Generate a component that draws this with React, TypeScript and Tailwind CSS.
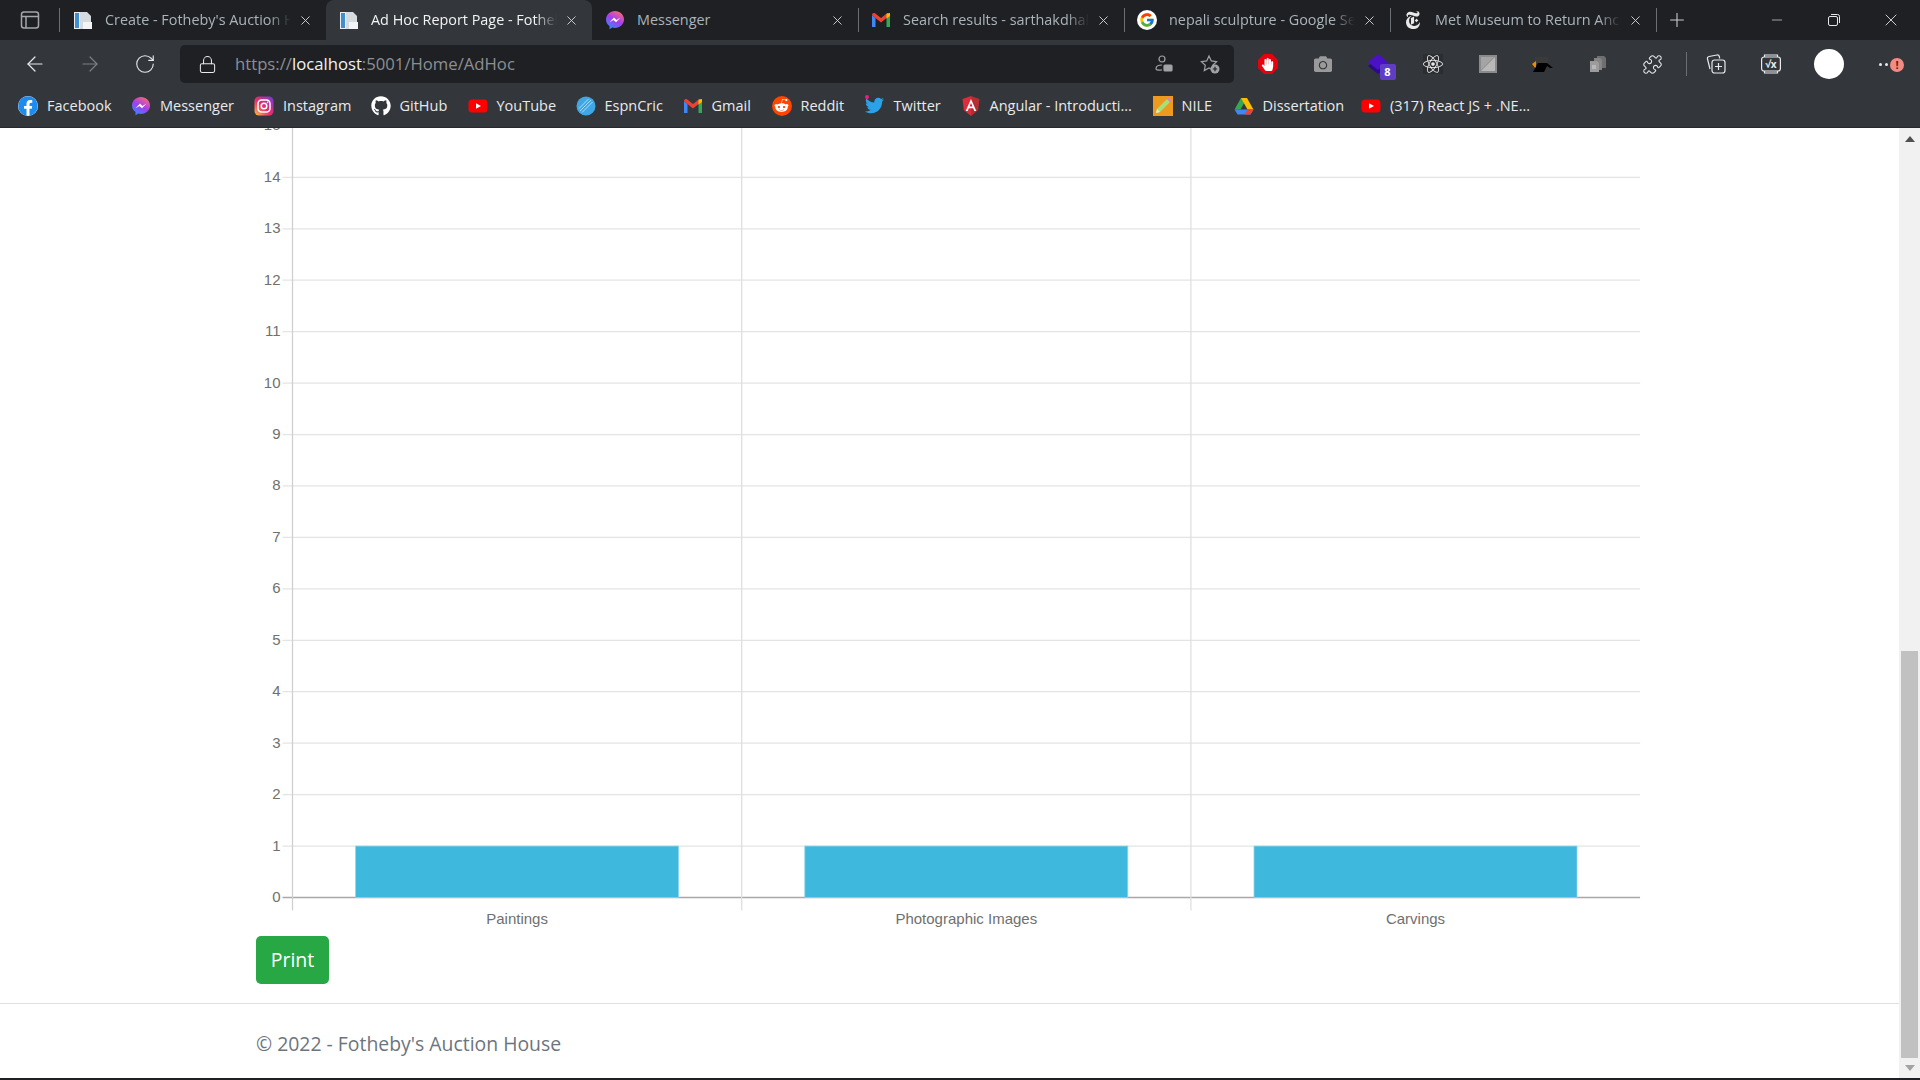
import type { ReactNode } from 'react'
import { ArrowLeft, ArrowRight, Lock, Minus, Plus, Puzzle, RotateCw, X } from 'lucide-react'
import { FaCamera, FaFacebook, FaGithub, FaHandPaper, FaReact, FaRedditAlien, FaTwitter } from 'react-icons/fa'
import { FcGoogle } from 'react-icons/fc'
import { SiNewyorktimes } from 'react-icons/si'

/* ---------- favicons ---------- */

function DocIcon() {
  return (
    <svg width="20" height="20" viewBox="0 0 20 20">
      <path d="M1 2h11l3 3v14H1z" fill="#e8eef3" />
      <rect x="2" y="3" width="4" height="15" fill="#3f8fd0" />
      <path d="M7 2h7l4 4v13H7z" fill="#d5dadf" />
      <rect x="10" y="12" width="9" height="7" fill="#f3f4f5" />
    </svg>
  )
}

function MessengerIcon() {
  return (
    <svg width="20" height="20" viewBox="0 0 20 20">
      <defs>
        <linearGradient id="msg" x1="0.2" y1="1" x2="0.8" y2="0">
          <stop offset="0" stopColor="#2f8bff" />
          <stop offset="0.5" stopColor="#a33ef0" />
          <stop offset="1" stopColor="#ff6a6e" />
        </linearGradient>
      </defs>
      <path d="M10 1c5 0 9 3.700 9 8.500S15 18 10 18c-1 0-1.800-.1-2.600-.4L4.500 19.300V16.100C2.300 14.500 1 12.200 1 9.500 1 4.700 5 1 10 1z" fill="url(#msg)" />
      <path d="M4.500 12.300 9 7.500l2.500 2.400 4-2.400-4.500 4.800-2.500-2.400z" fill="#fff" />
    </svg>
  )
}

function GmailIcon() {
  return (
    <svg width="20" height="20" viewBox="0 0 20 20">
      <path d="M1 5v12h3.500V8z" fill="#4285f4" />
      <path d="M15.500 8v9H19V5z" fill="#34a853" />
      <path d="M1 5c0-2 2-2.500 3-1.700L10 8l6-4.700c1-.8 3-.3 3 1.700l-3.500 3L10 12.500 4.500 8z" fill="#ea4335" />
      <path d="M15.500 3.800 19 3v3l-3.500 2.500z" fill="#fbbc04" />
    </svg>
  )
}

function YoutubeIcon() {
  return (
    <svg width="20" height="20" viewBox="0 0 20 20">
      <rect x="0.500" y="3.500" width="19" height="13" rx="3.500" fill="#f00" />
      <path d="M8 7.200 13 10l-5 2.800z" fill="#fff" />
    </svg>
  )
}

function InstagramIcon() {
  return (
    <svg width="20" height="20" viewBox="0 0 20 20">
      <defs>
        <linearGradient id="ig" x1="0" y1="1" x2="1" y2="0">
          <stop offset="0" stopColor="#fdc04a" />
          <stop offset="0.45" stopColor="#ee2a6b" />
          <stop offset="1" stopColor="#6a40d8" />
        </linearGradient>
      </defs>
      <rect x="0.500" y="0.500" width="19" height="19" rx="4.500" fill="url(#ig)" />
      <rect x="4" y="4" width="12" height="12" rx="3.500" fill="none" stroke="#fff" strokeWidth="1.500" />
      <circle cx="10" cy="10" r="2.800" fill="none" stroke="#fff" strokeWidth="1.500" />
      <circle cx="13.600" cy="6.400" r="0.800" fill="#fff" />
    </svg>
  )
}

function EspnIcon() {
  return (
    <svg width="20" height="20" viewBox="0 0 20 20">
      <circle cx="10" cy="10" r="9.500" fill="#3fa7e6" />
      <path d="M4 15 15 4M6 16.500 16.500 6M3 12.500 12.500 3" stroke="#a9dcf7" strokeWidth="1" />
    </svg>
  )
}

function RedditIcon() {
  return (
    <span className="flex h-5 w-5 items-center justify-center rounded-full bg-[#ff4500]">
      <FaRedditAlien size={15} color="#fff" />
    </span>
  )
}

function TwitterIcon() {
  return (
    <span className="relative flex h-5 w-5 items-center justify-center">
      <FaTwitter size={19} color="#2aa1e8" />
      <span className="absolute -top-[1px] left-0 h-1 w-1 rounded-full bg-[#e91e8c]" />
    </span>
  )
}

function AngularIcon() {
  return (
    <svg width="20" height="20" viewBox="0 0 20 20">
      <path d="M10 0 1.500 3l1.300 11.300L10 20z" fill="#dd2c3a" />
      <path d="M10 0l8.500 3-1.300 11.300L10 20z" fill="#b52e31" />
      <path d="M10 3 4.700 15h2l1.100-2.700h4.400l1.100 2.700h2zM8.500 10.600 10 7l1.500 3.600z" fill="#fff" />
    </svg>
  )
}

function NileIcon() {
  return (
    <svg width="20" height="20" viewBox="0 0 20 20">
      <rect width="20" height="20" fill="#ee9a1f" />
      <path d="M3 17 4 13 14 3l3 3L7 16z" fill="#a6e07a" />
      <path d="M14 3l1.500-1.500 3 3L17 6z" fill="#e07fc0" />
      <path d="M3 17 4 13l3 3z" fill="#f5e6c8" />
    </svg>
  )
}

function DriveIcon() {
  return (
    <svg width="20" height="20" viewBox="0 0 20 20">
      <path d="M7 2h6l-6.500 11.500H.500z" fill="#34a853" />
      <path d="M7 2h6l6.500 11.500h-6z" fill="#fbbc04" />
      <path d="M.500 13.500h19L16.500 18.500h-13z" fill="#4285f4" />
      <path d="M13.500 13.500h6l-3 5h-6z" fill="#ea4335" />
    </svg>
  )
}

function GoogleIcon() {
  return (
    <span className="flex h-5 w-5 items-center justify-center rounded-full bg-white">
      <FcGoogle size={16} />
    </span>
  )
}

/* ---------- tab strip ---------- */

interface Tab {
  title: string
  icon: ReactNode
  active?: boolean
  fade?: boolean
}

const TABS: Tab[] = [
  { title: "Create - Fotheby's Auction House", icon: <DocIcon />, fade: true },
  { title: 'Ad Hoc Report Page - Fotheby', icon: <DocIcon />, active: true, fade: true },
  { title: 'Messenger', icon: <MessengerIcon /> },
  { title: 'Search results - sarthakdhakal', icon: <GmailIcon />, fade: true },
  { title: 'nepali sculpture - Google Search', icon: <GoogleIcon />, fade: true },
  { title: 'Met Museum to Return Ancient', icon: <SiNewyorktimes size={18} color="#e8e8e8" />, fade: true },
]

function TabItem({ tab }: { tab: Tab }) {
  return (
    <div
      className={`flex h-10 w-[266px] shrink-0 items-center pl-[13px] ${
        tab.active ? 'rounded-t-lg bg-[#33363a]' : ''
      }`}
    >
      <span className="flex h-5 w-5 shrink-0 items-center justify-center">{tab.icon}</span>
      <span
        className={`ml-3 w-[186px] overflow-hidden text-[14.400px] whitespace-nowrap ${
          tab.active ? 'text-[#f1f3f4]' : 'text-[#a9b4bb]'
        } ${tab.fade ? '[mask-image:linear-gradient(to_right,black_88%,transparent)]' : ''}`}
      >
        {tab.title}
      </span>
      <X className="ml-[7px] shrink-0 text-[#d0d3d6]" size={15} strokeWidth={1.500} />
    </div>
  )
}

function Separator() {
  return <span className="-mr-[1px] h-6 w-[1px] shrink-0 bg-[#6b6e72]" />
}

function TabStrip() {
  return (
    <div className="flex h-10 shrink-0 items-center bg-[#1f2023]">
      <div className="flex w-[59px] shrink-0 justify-center">
        <svg width="20" height="20" viewBox="0 0 20 20" fill="none" stroke="#a4a7aa" strokeWidth="1.500">
          <rect x="1.500" y="2" width="17" height="16" rx="2.500" />
          <path d="M1.500 6.500h17M6 6.500V18" />
        </svg>
      </div>
      <Separator />
      <span className="w-[1px] shrink-0" />
      <TabItem tab={TABS[0]} />
      <TabItem tab={TABS[1]} />
      <TabItem tab={TABS[2]} />
      <Separator />
      <TabItem tab={TABS[3]} />
      <Separator />
      <TabItem tab={TABS[4]} />
      <Separator />
      <TabItem tab={TABS[5]} />
      <Separator />
      <Plus className="ml-[10px] text-[#c8cacc]" size={22} strokeWidth={1.200} />
      <div className="ml-auto flex items-center">
        <span className="flex w-[57px] justify-center">
          <Minus className="text-[#e6e6e6]" size={16} strokeWidth={1} />
        </span>
        <span className="flex w-[57px] justify-center">
          <svg width="14" height="14" viewBox="0 0 14 14" fill="none" stroke="#e6e6e6" strokeWidth="1">
            <rect x="1.500" y="3.500" width="9" height="9" rx="1.500" />
            <path d="M4 1.500h6.500a2 2 0 0 1 2 2V10" />
          </svg>
        </span>
        <span className="flex w-[58px] justify-center">
          <X className="text-[#f0f0f0]" size={20} strokeWidth={1} />
        </span>
      </div>
    </div>
  )
}

/* ---------- toolbar ---------- */

function Slot({ w, children }: { w: string; children: ReactNode }) {
  return <span className={`flex shrink-0 items-center justify-center ${w}`}>{children}</span>
}

function Toolbar() {
  return (
    <div className="flex h-12 shrink-0 items-center bg-[#33363a]">
      <div className="flex w-[180px] shrink-0 items-center pl-[7px]">
        <Slot w="w-[55px]"><ArrowLeft className="text-[#e8eaed]" size={24} strokeWidth={1.200} /></Slot>
        <Slot w="w-[55px]"><ArrowRight className="text-[#7c7f83]" size={24} strokeWidth={1.200} /></Slot>
        <Slot w="w-[55px]"><RotateCw className="text-[#e8eaed]" size={22} strokeWidth={1.200} /></Slot>
      </div>

      {/* Address bar */}
      <div className="flex h-[38px] w-[1054px] shrink-0 items-center rounded-[5px] bg-[#1f2023] pl-[18px]">
        <Lock className="text-[#e8eaed]" size={19} strokeWidth={1.300} />
        <span className="ml-[18px] text-[16.700px] text-[#8b8f93]">
          https://<span className="text-[#f1f3f4]">localhost</span>:5001/Home/AdHoc
        </span>
        <svg className="ml-auto" width="20" height="20" viewBox="0 0 20 20" fill="none" stroke="#a0a2a5" strokeWidth="1.200">
          <circle cx="8" cy="5" r="3" />
          <path d="M8 11c-4 0-6 1.500-6 3.500S4 16 8 16" />
          <rect x="10" y="11" width="8" height="6" rx="1" fill="#a0a2a5" />
        </svg>
        <svg className="mr-[14px] ml-[26px]" width="20" height="20" viewBox="0 0 20 20" fill="none" stroke="#a0a2a5" strokeWidth="1.200">
          <path d="M9 2l2.300 4.900 5.300.7-3.900 3.700 1 5.300L9 14l-4.700 2.600 1-5.300L1.400 7.600l5.300-.7z" />
          <circle cx="15" cy="15" r="4.500" fill="#a0a2a5" stroke="none" />
          <path d="M15 12.800v4.400M12.800 15h4.400" stroke="#1f2023" />
        </svg>
      </div>

      {/* Extensions */}
      <div className="flex items-center pl-[6px]">
        <Slot w="w-[55px]">
          <span className="relative flex h-5 w-5 items-center justify-center">
            <svg className="absolute inset-0" width="20" height="20" viewBox="0 0 20 20">
              <path d="M6 0h8l6 6v8l-6 6H6l-6-6V6z" fill="#e8000f" />
            </svg>
            <FaHandPaper className="relative" size={13} color="#fff" />
          </span>
        </Slot>
        <Slot w="w-[55px]"><FaCamera size={18} color="#9a9a9a" /></Slot>
        <Slot w="w-[55px]">
          <span className="relative block h-5 w-5">
            <svg width="20" height="20" viewBox="0 0 20 20">
              <path d="M0 12 10 5l10 7-10 8z" fill="#2a0a8a" />
              <path d="M0 8 10 0l10 8-10 8z" fill="#4a12c4" />
            </svg>
            <span className="absolute -right-[8px] -bottom-[6px] flex h-4 w-4 items-center justify-center rounded-[2px] bg-[#5f3dc4] text-[11px] font-bold text-white">
              8
            </span>
          </span>
        </Slot>
        <Slot w="w-[55px]">
          <span className="flex h-5 w-5 items-center justify-center bg-[#2b2e31]">
            <FaReact size={20} color="#e8e8e8" />
          </span>
        </Slot>
        <Slot w="w-[55px]">
          <svg width="18" height="18" viewBox="0 0 18 18">
            <rect width="18" height="18" fill="#8a8a8a" />
            <path d="M2 16 16 2v14z" fill="#b9b9b9" />
            <path d="M2 2h13L2 15z" fill="#a4a4a4" />
          </svg>
        </Slot>
        <Slot w="w-[55px]">
          <svg width="22" height="18" viewBox="0 0 22 18">
            <path d="M3 2h13v7H3z" fill="#3a3a3a" />
            <path d="M0 9 4 6v8z" fill="#f08a00" />
            <path d="M1 17 6 8h9l6 5-3 0-3-2-3 6z" fill="#000" />
          </svg>
        </Slot>
        <Slot w="w-[55px]">
          <svg width="18" height="18" viewBox="0 0 18 18">
            <path d="M8 1h7l2 2v10H8z" fill="#6f6f6f" />
            <path d="M5 3h6l2 2v10H5z" fill="#858585" />
            <path d="M1 6h7l2 2v9H1z" fill="#9c9c9c" />
            <rect x="3" y="10" width="4" height="4" fill="#b8b8b8" />
          </svg>
        </Slot>
        <Slot w="w-[55px]"><Puzzle className="text-[#e8eaed]" size={21} strokeWidth={1.200} /></Slot>
      </div>
      <span className="ml-[6px] h-6 w-[1px] shrink-0 bg-[#6b6e72]" />
      <Slot w="w-[58px]">
        <svg width="20" height="20" viewBox="0 0 20 20" fill="none" stroke="#e8eaed" strokeWidth="1.200">
          <path d="M4 15 1.500 5a2 2 0 0 1 1.500-2.500L11 1a2 2 0 0 1 2.300 1.500l.4 2" />
          <rect x="6" y="6" width="13" height="13" rx="2.500" />
          <path d="M12.500 9v7M9 12.500h7" />
        </svg>
      </Slot>
      <Slot w="w-[52px]">
        <span className="relative flex h-5 w-5 items-center justify-center">
          <svg className="absolute inset-0" width="20" height="20" viewBox="0 0 20 20" fill="none" stroke="#e8eaed" strokeWidth="1.200">
            <rect x="0.600" y="3" width="18.800" height="14" rx="2.500" />
            <path d="M3.500 3V1h13v2M3.500 17v2h13v-2" />
          </svg>
          <span className="relative text-[10px] leading-none font-bold text-[#e8eaed]">√x</span>
        </span>
      </Slot>
      <Slot w="w-[64px]"><span className="h-[30px] w-[30px] rounded-full bg-white" /></Slot>
      <span className="relative flex w-[50px] shrink-0 justify-center">
        <span className="flex gap-[3px]">
          <span className="h-[3px] w-[3px] rounded-full bg-[#e8eaed]" />
          <span className="h-[3px] w-[3px] rounded-full bg-[#e8eaed]" />
          <span className="h-[3px] w-[3px] rounded-full bg-[#e8eaed]" />
        </span>
        <span className="absolute top-[-5px] left-[29px] flex h-[14px] w-[14px] items-center justify-center rounded-full bg-[#f28b82] text-[11px] leading-none font-bold text-[#5c1a16]">
          !
        </span>
      </span>
    </div>
  )
}

/* ---------- bookmarks ---------- */

const BOOKMARKS: { label: string; icon: ReactNode; w: string }[] = [
  { label: 'Facebook', w: 'w-[63px]', icon: <span className="flex h-5 w-5 items-center justify-center rounded-full bg-white"><FaFacebook size={20} color="#1b8cf2" /></span> },
  { label: 'Messenger', w: 'w-[73px]', icon: <MessengerIcon /> },
  { label: 'Instagram', w: 'w-[66.500px]', icon: <InstagramIcon /> },
  { label: 'GitHub', w: 'w-[47px]', icon: <FaGithub size={20} color="#fff" /> },
  { label: 'YouTube', w: 'w-[58px]', icon: <YoutubeIcon /> },
  { label: 'EspnCric', w: 'w-[57px]', icon: <EspnIcon /> },
  { label: 'Gmail', w: 'w-[39px]', icon: <GmailIcon /> },
  { label: 'Reddit', w: 'w-[43px]', icon: <RedditIcon /> },
  { label: 'Twitter', w: 'w-[46px]', icon: <TwitterIcon /> },
  { label: 'Angular - Introducti...', w: 'w-[142px]', icon: <AngularIcon /> },
  { label: 'NILE', w: 'w-[31px]', icon: <NileIcon /> },
  { label: 'Dissertation', w: 'w-[77.500px]', icon: <DriveIcon /> },
  { label: '(317) React JS + .NE...', w: 'w-[142px]', icon: <YoutubeIcon /> },
]

function BookmarksBar() {
  return (
    <div className="flex h-10 shrink-0 items-center gap-[21px] border-b border-[#27292c] bg-[#33363a] pb-[4px] pl-[18px]">
      {BOOKMARKS.map((b) => (
        <div key={b.label} className="flex shrink-0 items-center gap-[9px]">
          <span className="flex h-5 w-5 items-center justify-center">{b.icon}</span>
          <span className={`text-[14.500px] whitespace-nowrap text-[#e8eaed] ${b.w}`}>{b.label}</span>
        </div>
      ))}
    </div>
  )
}

/* ---------- chart ---------- */

const CHART_TOP = 128
const zeroY = 897.5 - CHART_TOP
const STEP = 51.44
const AXIS_X = 292.5
const COL_W = 449.2
const BAR_W = 323
const CATEGORIES = ['Paintings', 'Photographic Images', 'Carvings']
const TICKS = Array.from({ length: 16 }, (_, i) => i)

function BarChart() {
  const chartRight = AXIS_X + COL_W * 3
  return (
    <svg className="block shrink-0" width="1899" height="800" viewBox="0 0 1899 800">
      {TICKS.map((n) => {
        const y = zeroY - n * STEP
        return (
          <g key={n}>
            <line
              x1={AXIS_X - 10}
              x2={chartRight}
              y1={y}
              y2={y}
              stroke={n === 0 ? '#a8a8a8' : '#e4e4e4'}
              strokeWidth={n === 0 ? 1.500 : 1.250}
            />
            <text x={AXIS_X - 12} y={y + 4.5} textAnchor="end" fontSize="15" fill="#707070" fontFamily="Liberation Sans, Arial, sans-serif">
              {n}
            </text>
          </g>
        )
      })}
      {[0, 1, 2].map((i) => (
        <line
          key={i}
          x1={AXIS_X + COL_W * i}
          x2={AXIS_X + COL_W * i}
          y1={0}
          y2={zeroY + 13}
          stroke={i === 0 ? '#cfcfcf' : '#dedede'}
          strokeWidth={1.250}
        />
      ))}
      {CATEGORIES.map((c, i) => {
        const cx = AXIS_X + COL_W * (i + 0.5)
        return (
          <g key={c}>
            <rect x={cx - BAR_W / 2} y={zeroY - STEP} width={BAR_W} height={STEP} fill="#3fb8dd" stroke="#8fd4ea" strokeWidth="0.800" />
            <text x={cx} y={zeroY + 26} textAnchor="middle" fontSize="15" fill="#707070" fontFamily="Liberation Sans, Arial, sans-serif">
              {c}
            </text>
          </g>
        )
      })}
    </svg>
  )
}

/* ---------- page ---------- */

function Scrollbar() {
  return (
    <div className="flex w-[21px] shrink-0 flex-col bg-[#f1f1f1]">
      <div className="flex h-[21px] shrink-0 items-center justify-center pt-[1px]">
        <svg width="10" height="6" viewBox="0 0 10 6"><path d="M5 0 10 6H0z" fill="#505050" /></svg>
      </div>
      <div className="flex-1 px-[2px]">
        <div className="mt-[502px] h-[407px] bg-[#c1c1c1]" />
      </div>
      <div className="flex h-[20px] shrink-0 items-center justify-center">
        <svg width="10" height="6" viewBox="0 0 10 6"><path d="M0 0h10L5 6z" fill="#a3a3a3" /></svg>
      </div>
    </div>
  )
}

export default function App() {
  return (
    <div className="flex h-screen w-screen flex-col overflow-hidden bg-black font-['Open_Sans',sans-serif]">
      <TabStrip />
      <Toolbar />
      <BookmarksBar />
      <div className="flex min-h-0 flex-1">
        <main className="flex min-w-0 flex-1 flex-col overflow-hidden bg-white">
          <BarChart />
          <div className="pl-[256px]">
            <button className="mt-[8px] h-12 w-[73px] rounded-[5px] bg-[#28a745] text-[19.500px] text-white">Print</button>
          </div>
          <footer className="mt-[19px] flex flex-1 items-center border-t border-[#dee2e6] pt-[5px] pl-[256px] text-[19.400px] text-[#6c757d]">
            © 2022 - Fotheby's Auction House
          </footer>
        </main>
        <Scrollbar />
      </div>
      <div className="h-[2px] shrink-0 bg-[#1f2023]" />
    </div>
  )
}
